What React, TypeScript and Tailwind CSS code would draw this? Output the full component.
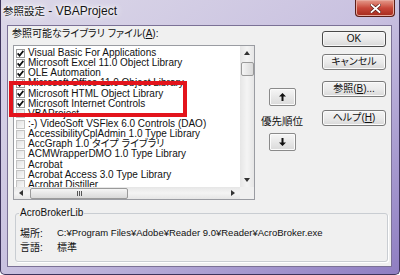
import React from "react";

const items: { t: string; c: boolean }[] = [
  { t: "Visual Basic For Applications", c: true },
  { t: "Microsoft Excel 11.0 Object Library", c: true },
  { t: "OLE Automation", c: true },
  { t: "Microsoft Office 11.0 Object Library", c: true },
  { t: "Microsoft HTML Object Library", c: true },
  { t: "Microsoft Internet Controls", c: true },
  { t: "VBAProject", c: false },
  { t: ":-) VideoSoft VSFlex 6.0 Controls (DAO)", c: false },
  { t: "AccessibilityCplAdmin 1.0 Type Library", c: false },
  { t: "AccGraph 1.0 タイプ ライブラリ", c: false },
  { t: "ACMWrapperDMO 1.0 Type Library", c: false },
  { t: "Acrobat", c: false },
  { t: "Acrobat Access 3.0 Type Library", c: false },
  { t: "Acrobat Distiller", c: false },
];

function Check({ checked }: { checked: boolean }) {
  return checked ? (
    <span className="w-[9px] h-[9px] shrink-0 border border-[#9a9a9a] bg-white flex items-center justify-center">
      <svg width="7" height="7" viewBox="0 0 7 7">
        <path d="M0.6 3.4 L2.6 5.6 L6.4 0.9" stroke="#111" strokeWidth="1.7" fill="none" />
      </svg>
    </span>
  ) : (
    <span className="w-[9px] h-[9px] shrink-0 border border-[#c4c4c4] bg-gradient-to-br from-[#e2e2e2] to-[#fafafa]" />
  );
}

function Btn({ children, def }: { children: React.ReactNode; def?: boolean }) {
  return (
    <div
      className={
        def
          ? "h-[16px] w-[64px] rounded-[3px] border border-[#4a4a4a] bg-gradient-to-b from-[#f4f4f4] via-[#ebebeb] to-[#d8d8d8] flex items-center justify-center text-[10px] leading-none text-[#111] shadow-[inset_0_0_0_1px_#f8f8f8]"
          : "h-[16px] w-[64px] rounded-[3px] border border-[#7a7a7a] bg-gradient-to-b from-[#f4f4f4] via-[#ebebeb] to-[#d8d8d8] flex items-center justify-center text-[10px] leading-none text-[#111] shadow-[inset_0_0_0_1px_#fbfbfb]"
      }
    >
      {children}
    </div>
  );
}

function ArrowBtn({ up }: { up?: boolean }) {
  return (
    <div className="w-[27px] h-[18px] rounded-[2px] border border-[#8a8a8a] bg-gradient-to-b from-[#f6f6f6] to-[#dadada] flex items-center justify-center shadow-[inset_0_0_0_1px_#fbfbfb]">
      <svg width="7" height="8" viewBox="0 0 7 8">
        {up ? (
          <path d="M3.5 0 L7 3.5 L4.5 3.5 L4.5 8 L2.5 8 L2.5 3.5 L0 3.5Z" fill="#111" />
        ) : (
          <path d="M3.5 8 L7 4.5 L4.5 4.5 L4.5 0 L2.5 0 L2.5 4.5 L0 4.5Z" fill="#111" />
        )}
      </svg>
    </div>
  );
}

export default function App() {
  return (
    <div className="relative w-[400px] h-[275px] overflow-hidden font-['Liberation_Sans','Noto_Sans_CJK_JP',sans-serif] [font-feature-settings:'palt'] bg-gradient-to-br from-[#dcd8e8] via-[#c9c1e0] to-[#8f7ec2] border-l border-r border-b border-[#3e345c] rounded-b-[5px] flex flex-col">
      {/* title bar */}
      <div className="h-[25px] shrink-0 flex items-start justify-between">
        <div className="pl-[2px] pt-[3px] leading-[14px] text-[#151515] [text-shadow:0_0_6px_#fff,0_0_3px_#fff,0_0_10px_#fff]">
          <span className="text-[10.5px]">参照設定</span>
          <span className="text-[12px]"> - VBAProject</span>
        </div>
        <div className="mr-[4px] w-[40px] h-[17px] rounded-b-[4px] border border-t-0 border-[#5a1e18] bg-gradient-to-b from-[#e49a8c] via-[#c8473a] to-[#a42a1c] flex items-center justify-center shadow-[inset_0_0_0_1px_#e8a89c]">
          <svg width="11" height="9" viewBox="0 0 11 9">
            <path d="M1.5 1 L9.5 8 M9.5 1 L1.5 8" stroke="#5a1e18" strokeWidth="3.2" strokeLinecap="square" />
            <path d="M1.5 1 L9.5 8 M9.5 1 L1.5 8" stroke="#fff" strokeWidth="1.8" strokeLinecap="square" />
          </svg>
        </div>
      </div>

      {/* frame body */}
      <div className="flex-1 flex pl-[6px] pr-[7px] pb-[7px]">
        <div className="flex-1 border border-[#7b7196] bg-[#f0f0f0] flex flex-col text-[10px] text-[#111]">
          {/* top section */}
          <div className="flex items-start">
            {/* left column */}
            <div className="pl-[4px] pt-[2px] flex flex-col">
              <div className="h-[17px] leading-[12px]">
                参照可能なライブラリ ファイル(<span className="underline">A</span>):
              </div>
              <div className="ml-[1px] w-[242px] h-[155px] border border-[#9a9ca2] bg-white flex flex-col">
                <div className="flex h-[141px]">
                  <div className="flex-1 overflow-hidden pt-[2px] pl-[2px]">
                    {items.map((it, i) => (
                      <div key={i} className="h-[10.15px] flex items-center gap-[3px] whitespace-nowrap leading-none">
                        <Check checked={it.c} />
                        <span>{it.t}</span>
                      </div>
                    ))}
                  </div>
                  {/* vertical scrollbar */}
                  <div className="w-[14px] bg-gradient-to-r from-[#e6e6e6] via-[#f4f4f4] to-[#e6e6e6] flex flex-col items-center">
                    <div className="h-[14px] w-full flex items-center justify-center">
                      <svg width="6" height="4" viewBox="0 0 6 4">
                        <path d="M0 4 L3 0 L6 4Z" fill="#333" />
                      </svg>
                    </div>
                    <div className="mt-[2px] h-[14px] w-[13px] rounded-[2px] border border-[#9a9a9a] bg-gradient-to-r from-[#f5f5f5] to-[#d9d9d9]" />
                    <div className="flex-1" />
                    <div className="h-[14px] w-full flex items-center justify-center">
                      <svg width="6" height="4" viewBox="0 0 6 4">
                        <path d="M0 0 L3 4 L6 0Z" fill="#333" />
                      </svg>
                    </div>
                  </div>
                </div>
                {/* horizontal scrollbar */}
                <div className="flex h-[12px]">
                  <div className="flex-1 flex items-center bg-gradient-to-b from-[#e6e6e6] via-[#f4f4f4] to-[#e6e6e6]">
                    <div className="w-[14px] h-full flex items-center justify-center">
                      <svg width="4" height="6" viewBox="0 0 4 6">
                        <path d="M4 0 L0 3 L4 6Z" fill="#333" />
                      </svg>
                    </div>
                    <div className="ml-[2px] w-[98px] h-[11px] rounded-[2px] border border-[#9a9a9a] bg-gradient-to-b from-[#f5f5f5] to-[#d9d9d9] flex items-center justify-center gap-[1px]">
                      <span className="w-[1px] h-[5px] bg-[#555]" />
                      <span className="w-[1px] h-[5px] bg-[#555]" />
                      <span className="w-[1px] h-[5px] bg-[#555]" />
                    </div>
                    <div className="flex-1" />
                    <div className="w-[14px] h-full flex items-center justify-center">
                      <svg width="4" height="6" viewBox="0 0 4 6">
                        <path d="M0 0 L4 3 L0 6Z" fill="#333" />
                      </svg>
                    </div>
                  </div>
                  <div className="w-[14px] bg-[#f0f0f0]" />
                </div>
              </div>
            </div>

            {/* middle column */}
            <div className="ml-[5px] w-[44px] pt-[62px] flex flex-col items-center">
              <ArrowBtn up />
              <div className="mt-[8px] h-[14px] leading-[14px] text-[10.5px]">優先順位</div>
              <div className="mt-[5px]">
                <ArrowBtn />
              </div>
            </div>

            {/* right column */}
            <div className="ml-[18px] pt-[5px] flex flex-col">
              <Btn def>OK</Btn>
              <div className="mt-[7px]">
                <Btn>キャンセル</Btn>
              </div>
              <div className="mt-[11px]">
                <Btn>
                  参照(<span className="underline">B</span>)...
                </Btn>
              </div>
              <div className="mt-[13px]">
                <Btn>
                  ヘルプ(<span className="underline">H</span>)
                </Btn>
              </div>
            </div>
          </div>

          {/* group box */}
          <div className="relative mt-[13px] ml-[7px] mr-[3px] h-[49px] border border-[#c9cdd2] rounded-[3px] shadow-[1px_1px_0_#fff] pt-[12px] pl-[4px]">
            <div className="absolute -top-[7px] left-[3px] px-[1px] bg-[#f0f0f0] leading-[12px]">AcroBrokerLib</div>
            <div className="flex h-[14px] items-center">
              <span className="w-[37px]">場所:</span>
              <span className="whitespace-nowrap text-[9.5px]">C:¥Program Files¥Adobe¥Reader 9.0¥Reader¥AcroBroker.exe</span>
            </div>
            <div className="flex h-[14px] items-center">
              <span className="w-[37px]">言語:</span>
              <span>標準</span>
            </div>
          </div>
        </div>
      </div>

      {/* red annotation */}
      <div className="absolute left-[8px] top-[81px] w-[178px] h-[36px] border-[4px] border-[#e3141c]" />
    </div>
  );
}
